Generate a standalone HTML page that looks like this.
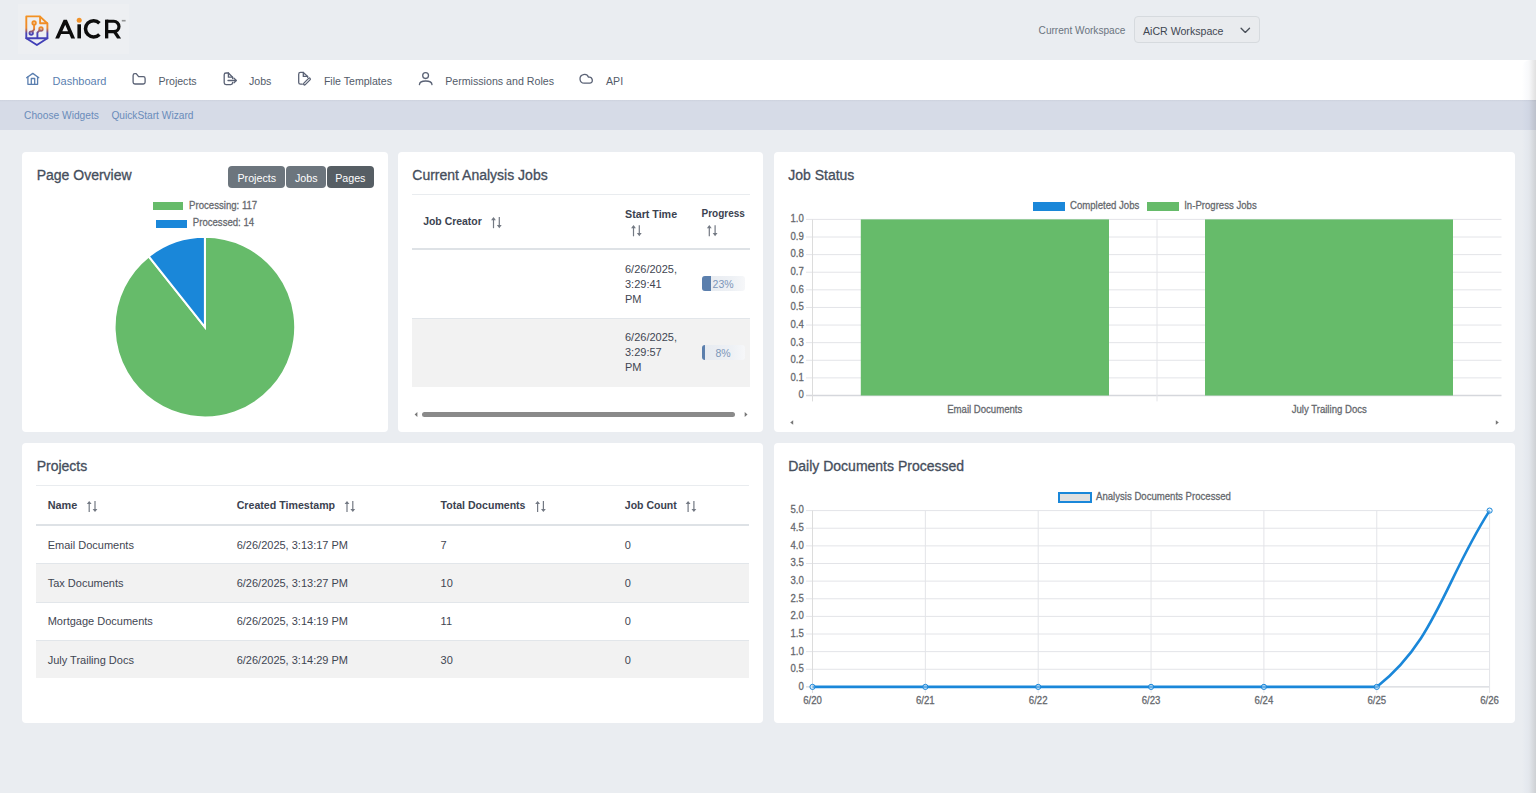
<!DOCTYPE html><html><head><meta charset="utf-8"><style>
html,body{margin:0;padding:0;}
body{width:1536px;height:793px;overflow:hidden;position:relative;background:#eaedf1;font-family:"Liberation Sans",sans-serif;}
.t{position:absolute;white-space:nowrap;line-height:1;}
.c{-webkit-text-stroke:0.25px #65686d;}
.card{position:absolute;background:#fff;border-radius:4px;}
svg{position:absolute;left:0;top:0;overflow:visible}
</style></head><body>
<div style="position:absolute;left:18px;top:4px;width:110.5px;height:49.6px;background:#edeff2;"></div>
<div class="t" style="left:1038.60px;top:25.65px;font-size:10.1px;color:#6b7480;font-weight:400;">Current Workspace</div>
<div style="position:absolute;left:1134.4px;top:16.3px;width:125.5px;height:27.099999999999998px;background:#e9ebee;border:1px solid #d6dade;border-radius:4px;box-sizing:border-box;"></div>
<div class="t" style="left:1143.00px;top:26.03px;font-size:10.6px;color:#3f4752;font-weight:400;">AiCR Workspace</div>
<div style="position:absolute;left:0px;top:60px;width:1536px;height:40px;background:#ffffff;"></div>
<div style="position:absolute;left:0px;top:100px;width:1536px;height:30px;background:#d6dbe7;"></div>
<div style="position:absolute;left:0px;top:100px;width:1536px;height:2px;background:linear-gradient(#cdd2de,#d6dbe7);"></div>
<div class="t" style="left:52.60px;top:75.59px;font-size:11px;color:#5b7fb0;font-weight:400;">Dashboard</div>
<div class="t" style="left:158.40px;top:75.93px;font-size:10.6px;color:#535b69;font-weight:400;">Projects</div>
<div class="t" style="left:249.00px;top:75.93px;font-size:10.6px;color:#535b69;font-weight:400;">Jobs</div>
<div class="t" style="left:323.90px;top:75.93px;font-size:10.6px;color:#535b69;font-weight:400;">File Templates</div>
<div class="t" style="left:445.20px;top:75.88px;font-size:10.65px;color:#535b69;font-weight:400;">Permissions and Roles</div>
<div class="t" style="left:606.00px;top:75.93px;font-size:10.6px;color:#535b69;font-weight:400;">API</div>
<div class="t" style="left:24.10px;top:110.67px;font-size:10.2px;color:#6a8cba;font-weight:400;">Choose Widgets</div>
<div class="t" style="left:111.40px;top:110.67px;font-size:10.2px;color:#6a8cba;font-weight:400;">QuickStart Wizard</div>
<div style="position:absolute;left:1522px;top:60px;width:14px;height:733px;background:linear-gradient(90deg, rgba(0,0,0,0) 0%, rgba(40,80,160,0.025) 30%, rgba(20,40,90,0.03) 50%, rgba(0,0,0,0.12) 100%);border-top-left-radius:8px;"></div>
<div class="card" style="left:22px;top:152px;width:366px;height:280px"></div>
<div class="card" style="left:398px;top:152px;width:365px;height:280px"></div>
<div class="card" style="left:774px;top:152px;width:741px;height:280px"></div>
<div class="card" style="left:22px;top:443px;width:741px;height:280px"></div>
<div class="card" style="left:774px;top:443px;width:741px;height:280px"></div>
<div class="t" style="left:36.70px;top:168.15px;font-size:14px;color:#454e5c;font-weight:400;-webkit-text-stroke:0.3px #454e5c;">Page Overview</div>
<div class="t" style="left:412.30px;top:167.95px;font-size:14px;color:#454e5c;font-weight:400;-webkit-text-stroke:0.3px #454e5c;">Current Analysis Jobs</div>
<div class="t" style="left:788.20px;top:167.95px;font-size:14px;color:#454e5c;font-weight:400;-webkit-text-stroke:0.3px #454e5c;">Job Status</div>
<div class="t" style="left:36.70px;top:459.25px;font-size:14px;color:#454e5c;font-weight:400;-webkit-text-stroke:0.3px #454e5c;">Projects</div>
<div class="t" style="left:788.20px;top:459.25px;font-size:14px;color:#454e5c;font-weight:400;-webkit-text-stroke:0.3px #454e5c;">Daily Documents Processed</div>
<div style="position:absolute;left:228.3px;top:165.5px;width:57.0px;height:22.19999999999999px;background:#6c757d;border-radius:4px;"></div>
<div style="position:absolute;left:286.4px;top:165.5px;width:39.900000000000034px;height:22.19999999999999px;background:#6c757d;border-radius:4px;"></div>
<div style="position:absolute;left:326.9px;top:165.5px;width:46.900000000000034px;height:22.19999999999999px;background:#565e64;border-radius:4px;"></div>
<div class="t" style="left:256.80px;transform:translateX(-50%) ;top:172.84px;font-size:10.7px;color:#fff;font-weight:400;">Projects</div>
<div class="t" style="left:306.30px;transform:translateX(-50%) ;top:172.84px;font-size:10.7px;color:#fff;font-weight:400;">Jobs</div>
<div class="t" style="left:350.30px;transform:translateX(-50%) ;top:172.84px;font-size:10.7px;color:#fff;font-weight:400;">Pages</div>
<div style="position:absolute;left:152.8px;top:202.4px;width:30.5px;height:7.799999999999983px;background:#66bb6a;"></div>
<div class="t c" style="left:189.10px;transform-origin:0 8.13px;transform:scaleY(1.14);top:200.87px;font-size:9.6px;color:#65686d;font-weight:400;">Processing: 117</div>
<div style="position:absolute;left:156px;top:219.8px;width:30.80000000000001px;height:8.0px;background:#1a87d9;"></div>
<div class="t c" style="left:192.80px;transform-origin:0 8.13px;transform:scaleY(1.14);top:218.47px;font-size:9.6px;color:#65686d;font-weight:400;">Processed: 14</div>
<div style="position:absolute;left:412px;top:193.5px;width:337.5px;height:1.0px;background:#e9ecef;"></div>
<div class="t" style="left:423.20px;top:217.16px;font-size:10.44px;color:#3b4250;font-weight:700;">Job Creator</div>
<div class="t" style="left:625.00px;top:208.64px;font-size:10.7px;color:#3b4250;font-weight:700;">Start Time</div>
<div class="t" style="left:701.50px;top:209.23px;font-size:10.0px;color:#3b4250;font-weight:700;">Progress</div>
<div style="position:absolute;left:412px;top:247.5px;width:337.5px;height:2.0px;background:#dee2e6;"></div>
<div style="position:absolute;left:412px;top:317.5px;width:337.5px;height:69.0px;background:#f2f2f2;"></div>
<div style="position:absolute;left:412px;top:317.5px;width:337.5px;height:1.0px;background:#e2e6ea;"></div>
<div class="t" style="left:625.00px;top:263.69px;font-size:11px;color:#3f4652;font-weight:400;">6/26/2025,</div>
<div class="t" style="left:625.00px;top:278.59px;font-size:11px;color:#3f4652;font-weight:400;">3:29:41</div>
<div class="t" style="left:625.00px;top:293.59px;font-size:11px;color:#3f4652;font-weight:400;">PM</div>
<div class="t" style="left:625.00px;top:332.49px;font-size:11px;color:#3f4652;font-weight:400;">6/26/2025,</div>
<div class="t" style="left:625.00px;top:347.39px;font-size:11px;color:#3f4652;font-weight:400;">3:29:57</div>
<div class="t" style="left:625.00px;top:362.39px;font-size:11px;color:#3f4652;font-weight:400;">PM</div>
<div style="position:absolute;left:701.5px;top:276px;width:43.200000000000045px;height:15.199999999999989px;background:linear-gradient(90deg,#e6eaf0,#eef1f5 70%,#f6f7f9);border-radius:3px;"></div>
<div style="position:absolute;left:701.5px;top:276px;width:9.936000000000035px;height:15.199999999999989px;background:#5b7fad;border-radius:3px 0 0 3px;"></div>
<div class="t" style="left:723.10px;transform:translateX(-50%) ;top:279.41px;font-size:10.5px;color:#7d96b9;font-weight:400;">23%</div>
<div style="position:absolute;left:701.5px;top:344.8px;width:43.200000000000045px;height:15.199999999999989px;background:linear-gradient(90deg,#e6eaf0,#eef1f5 70%,#f6f7f9);border-radius:3px;"></div>
<div style="position:absolute;left:701.5px;top:344.8px;width:3.4560000000000173px;height:15.199999999999989px;background:#5b7fad;border-radius:3px 0 0 3px;"></div>
<div class="t" style="left:723.10px;transform:translateX(-50%) ;top:348.21px;font-size:10.5px;color:#7d96b9;font-weight:400;">8%</div>
<div style="position:absolute;left:422px;top:412.1px;width:313px;height:4.7999999999999545px;background:#8a8a8a;border-radius:2.5px;"></div>
<div class="t c" style="right:732.20px;transform-origin:0 8.13px;transform:scaleY(1.14);top:214.27px;font-size:9.6px;color:#65686d;font-weight:400;">1.0</div>
<div class="t c" style="right:732.20px;transform-origin:0 8.13px;transform:scaleY(1.14);top:231.88px;font-size:9.6px;color:#65686d;font-weight:400;">0.9</div>
<div class="t c" style="right:732.20px;transform-origin:0 8.13px;transform:scaleY(1.14);top:249.49px;font-size:9.6px;color:#65686d;font-weight:400;">0.8</div>
<div class="t c" style="right:732.20px;transform-origin:0 8.13px;transform:scaleY(1.14);top:267.10px;font-size:9.6px;color:#65686d;font-weight:400;">0.7</div>
<div class="t c" style="right:732.20px;transform-origin:0 8.13px;transform:scaleY(1.14);top:284.71px;font-size:9.6px;color:#65686d;font-weight:400;">0.6</div>
<div class="t c" style="right:732.20px;transform-origin:0 8.13px;transform:scaleY(1.14);top:302.32px;font-size:9.6px;color:#65686d;font-weight:400;">0.5</div>
<div class="t c" style="right:732.20px;transform-origin:0 8.13px;transform:scaleY(1.14);top:319.93px;font-size:9.6px;color:#65686d;font-weight:400;">0.4</div>
<div class="t c" style="right:732.20px;transform-origin:0 8.13px;transform:scaleY(1.14);top:337.54px;font-size:9.6px;color:#65686d;font-weight:400;">0.3</div>
<div class="t c" style="right:732.20px;transform-origin:0 8.13px;transform:scaleY(1.14);top:355.15px;font-size:9.6px;color:#65686d;font-weight:400;">0.2</div>
<div class="t c" style="right:732.20px;transform-origin:0 8.13px;transform:scaleY(1.14);top:372.76px;font-size:9.6px;color:#65686d;font-weight:400;">0.1</div>
<div class="t c" style="right:732.20px;transform-origin:0 8.13px;transform:scaleY(1.14);top:390.37px;font-size:9.6px;color:#65686d;font-weight:400;">0</div>
<div class="t c" style="left:984.75px;transform-origin:0 8.13px;transform:translateX(-50%) scaleY(1.14);top:404.97px;font-size:9.6px;color:#65686d;font-weight:400;">Email Documents</div>
<div class="t c" style="left:1329.25px;transform-origin:0 8.13px;transform:translateX(-50%) scaleY(1.14);top:404.97px;font-size:9.6px;color:#65686d;font-weight:400;">July Trailing Docs</div>
<div style="position:absolute;left:1033px;top:201.7px;width:32px;height:9.400000000000006px;background:#1a87d9;"></div>
<div class="t c" style="left:1070.00px;transform-origin:0 8.13px;transform:scaleY(1.14);top:201.17px;font-size:9.6px;color:#65686d;font-weight:400;">Completed Jobs</div>
<div style="position:absolute;left:1147.2px;top:201.7px;width:31.799999999999955px;height:9.400000000000006px;background:#66bb6a;"></div>
<div class="t c" style="left:1184.20px;transform-origin:0 8.13px;transform:scaleY(1.14);top:201.17px;font-size:9.6px;color:#65686d;font-weight:400;">In-Progress Jobs</div>
<div style="position:absolute;left:36px;top:484.7px;width:713.4px;height:1.0px;background:#e9ecef;"></div>
<div class="t" style="left:47.70px;top:500.21px;font-size:10.86px;color:#3b4250;font-weight:700;">Name</div>
<div class="t" style="left:236.70px;top:500.40px;font-size:10.63px;color:#3b4250;font-weight:700;">Created Timestamp</div>
<div class="t" style="left:440.60px;top:500.45px;font-size:10.57px;color:#3b4250;font-weight:700;">Total Documents</div>
<div class="t" style="left:624.80px;top:500.49px;font-size:10.52px;color:#3b4250;font-weight:700;">Job Count</div>
<div style="position:absolute;left:36px;top:524px;width:713.4px;height:2px;background:#dee2e6;"></div>
<div class="t" style="left:47.70px;top:539.89px;font-size:11px;color:#3f4652;font-weight:400;">Email Documents</div>
<div class="t" style="left:236.70px;top:539.89px;font-size:11px;color:#3f4652;font-weight:400;">6/26/2025, 3:13:17 PM</div>
<div class="t" style="left:440.60px;top:539.89px;font-size:11px;color:#3f4652;font-weight:400;">7</div>
<div class="t" style="left:624.80px;top:539.89px;font-size:11px;color:#3f4652;font-weight:400;">0</div>
<div style="position:absolute;left:36px;top:562.7px;width:713.4px;height:39.59999999999991px;background:#f2f2f2;"></div>
<div style="position:absolute;left:36px;top:562.7px;width:713.4px;height:1.0px;background:#e2e6ea;"></div>
<div class="t" style="left:47.70px;top:577.99px;font-size:11px;color:#3f4652;font-weight:400;">Tax Documents</div>
<div class="t" style="left:236.70px;top:577.99px;font-size:11px;color:#3f4652;font-weight:400;">6/26/2025, 3:13:27 PM</div>
<div class="t" style="left:440.60px;top:577.99px;font-size:11px;color:#3f4652;font-weight:400;">10</div>
<div class="t" style="left:624.80px;top:577.99px;font-size:11px;color:#3f4652;font-weight:400;">0</div>
<div style="position:absolute;left:36px;top:602.3px;width:713.4px;height:1.0px;background:#e2e6ea;"></div>
<div class="t" style="left:47.70px;top:616.29px;font-size:11px;color:#3f4652;font-weight:400;">Mortgage Documents</div>
<div class="t" style="left:236.70px;top:616.29px;font-size:11px;color:#3f4652;font-weight:400;">6/26/2025, 3:14:19 PM</div>
<div class="t" style="left:440.60px;top:616.29px;font-size:11px;color:#3f4652;font-weight:400;">11</div>
<div class="t" style="left:624.80px;top:616.29px;font-size:11px;color:#3f4652;font-weight:400;">0</div>
<div style="position:absolute;left:36px;top:640.1px;width:713.4px;height:38.299999999999955px;background:#f2f2f2;"></div>
<div style="position:absolute;left:36px;top:640.1px;width:713.4px;height:1.0px;background:#e2e6ea;"></div>
<div class="t" style="left:47.70px;top:654.69px;font-size:11px;color:#3f4652;font-weight:400;">July Trailing Docs</div>
<div class="t" style="left:236.70px;top:654.69px;font-size:11px;color:#3f4652;font-weight:400;">6/26/2025, 3:14:29 PM</div>
<div class="t" style="left:440.60px;top:654.69px;font-size:11px;color:#3f4652;font-weight:400;">30</div>
<div class="t" style="left:624.80px;top:654.69px;font-size:11px;color:#3f4652;font-weight:400;">0</div>
<div class="t c" style="right:732.20px;transform-origin:0 8.13px;transform:scaleY(1.14);top:505.47px;font-size:9.6px;color:#65686d;font-weight:400;">5.0</div>
<div class="t c" style="right:732.20px;transform-origin:0 8.13px;transform:scaleY(1.14);top:523.10px;font-size:9.6px;color:#65686d;font-weight:400;">4.5</div>
<div class="t c" style="right:732.20px;transform-origin:0 8.13px;transform:scaleY(1.14);top:540.73px;font-size:9.6px;color:#65686d;font-weight:400;">4.0</div>
<div class="t c" style="right:732.20px;transform-origin:0 8.13px;transform:scaleY(1.14);top:558.36px;font-size:9.6px;color:#65686d;font-weight:400;">3.5</div>
<div class="t c" style="right:732.20px;transform-origin:0 8.13px;transform:scaleY(1.14);top:575.99px;font-size:9.6px;color:#65686d;font-weight:400;">3.0</div>
<div class="t c" style="right:732.20px;transform-origin:0 8.13px;transform:scaleY(1.14);top:593.62px;font-size:9.6px;color:#65686d;font-weight:400;">2.5</div>
<div class="t c" style="right:732.20px;transform-origin:0 8.13px;transform:scaleY(1.14);top:611.25px;font-size:9.6px;color:#65686d;font-weight:400;">2.0</div>
<div class="t c" style="right:732.20px;transform-origin:0 8.13px;transform:scaleY(1.14);top:628.88px;font-size:9.6px;color:#65686d;font-weight:400;">1.5</div>
<div class="t c" style="right:732.20px;transform-origin:0 8.13px;transform:scaleY(1.14);top:646.51px;font-size:9.6px;color:#65686d;font-weight:400;">1.0</div>
<div class="t c" style="right:732.20px;transform-origin:0 8.13px;transform:scaleY(1.14);top:664.14px;font-size:9.6px;color:#65686d;font-weight:400;">0.5</div>
<div class="t c" style="right:732.20px;transform-origin:0 8.13px;transform:scaleY(1.14);top:681.77px;font-size:9.6px;color:#65686d;font-weight:400;">0</div>
<div class="t c" style="left:812.50px;transform-origin:0 8.13px;transform:translateX(-50%) scaleY(1.14);top:695.77px;font-size:9.6px;color:#65686d;font-weight:400;">6/20</div>
<div class="t c" style="left:925.35px;transform-origin:0 8.13px;transform:translateX(-50%) scaleY(1.14);top:695.77px;font-size:9.6px;color:#65686d;font-weight:400;">6/21</div>
<div class="t c" style="left:1038.20px;transform-origin:0 8.13px;transform:translateX(-50%) scaleY(1.14);top:695.77px;font-size:9.6px;color:#65686d;font-weight:400;">6/22</div>
<div class="t c" style="left:1151.05px;transform-origin:0 8.13px;transform:translateX(-50%) scaleY(1.14);top:695.77px;font-size:9.6px;color:#65686d;font-weight:400;">6/23</div>
<div class="t c" style="left:1263.90px;transform-origin:0 8.13px;transform:translateX(-50%) scaleY(1.14);top:695.77px;font-size:9.6px;color:#65686d;font-weight:400;">6/24</div>
<div class="t c" style="left:1376.75px;transform-origin:0 8.13px;transform:translateX(-50%) scaleY(1.14);top:695.77px;font-size:9.6px;color:#65686d;font-weight:400;">6/25</div>
<div class="t c" style="left:1489.60px;transform-origin:0 8.13px;transform:translateX(-50%) scaleY(1.14);top:695.77px;font-size:9.6px;color:#65686d;font-weight:400;">6/26</div>
<div style="position:absolute;left:1057.7px;top:492.2px;width:34.09999999999991px;height:11.199999999999989px;background:#e0e0e0;border:2.6px solid #1a87d9;box-sizing:border-box;"></div>
<div class="t c" style="left:1096.00px;transform-origin:0 8.13px;transform:scaleY(1.14);top:492.07px;font-size:9.6px;color:#65686d;font-weight:400;">Analysis Documents Processed</div>
<svg width="1536" height="793" viewBox="0 0 1536 793"><path d="M204.9,327.1 L204.9,236.8 A90.3,90.3 0 1 1 148.72,256.40 Z" fill="#66bb6a" stroke="#fff" stroke-width="2"/><path d="M204.9,327.1 L148.72,256.40 A90.3,90.3 0 0 1 204.9,236.8 Z" fill="#1a87d9" stroke="#fff" stroke-width="2"/><path d="M417.4,412 L414.6,414.5 L417.4,417 Z" fill="#777"/><path d="M744.7,412 L747.5,414.5 L744.7,417 Z" fill="#777"/><g stroke="#737983" stroke-width="1.2" fill="none"><path d="M493.5,218.4 V228.20000000000002"/><path d="M499.3,217.1 V226.9"/></g><path d="M491.1,220.20000000000002 L493.5,217.0 L495.9,220.20000000000002 Z" fill="#737983"/><path d="M496.9,225.0 L499.3,228.20000000000002 L501.7,225.0 Z" fill="#737983"/><g stroke="#737983" stroke-width="1.2" fill="none"><path d="M633.5,226.5 V236.3"/><path d="M639.3,225.2 V235.0"/></g><path d="M631.1,228.3 L633.5,225.1 L635.9,228.3 Z" fill="#737983"/><path d="M636.9,233.1 L639.3,236.3 L641.7,233.1 Z" fill="#737983"/><g stroke="#737983" stroke-width="1.2" fill="none"><path d="M709.3,226.5 V236.3"/><path d="M715.0999999999999,225.2 V235.0"/></g><path d="M706.9,228.3 L709.3,225.1 L711.6999999999999,228.3 Z" fill="#737983"/><path d="M712.6999999999999,233.1 L715.0999999999999,236.3 L717.5,233.1 Z" fill="#737983"/><line x1="806" y1="219.40" x2="1501.5" y2="219.40" stroke="#e3e4e8" stroke-width="1"/><line x1="806" y1="237.01" x2="1501.5" y2="237.01" stroke="#e3e4e8" stroke-width="1"/><line x1="806" y1="254.62" x2="1501.5" y2="254.62" stroke="#e3e4e8" stroke-width="1"/><line x1="806" y1="272.23" x2="1501.5" y2="272.23" stroke="#e3e4e8" stroke-width="1"/><line x1="806" y1="289.84" x2="1501.5" y2="289.84" stroke="#e3e4e8" stroke-width="1"/><line x1="806" y1="307.45" x2="1501.5" y2="307.45" stroke="#e3e4e8" stroke-width="1"/><line x1="806" y1="325.06" x2="1501.5" y2="325.06" stroke="#e3e4e8" stroke-width="1"/><line x1="806" y1="342.67" x2="1501.5" y2="342.67" stroke="#e3e4e8" stroke-width="1"/><line x1="806" y1="360.28" x2="1501.5" y2="360.28" stroke="#e3e4e8" stroke-width="1"/><line x1="806" y1="377.89" x2="1501.5" y2="377.89" stroke="#e3e4e8" stroke-width="1"/><line x1="806" y1="395.50" x2="1501.5" y2="395.50" stroke="#d5d7dc" stroke-width="1.3"/><line x1="812.5" y1="219.4" x2="812.5" y2="401.4" stroke="#dcdcdc" stroke-width="1"/><line x1="1157" y1="219.4" x2="1157" y2="401.4" stroke="#e3e4e8" stroke-width="1"/><rect x="860.8" y="219.4" width="248.2" height="176.10" fill="#66bb6a"/><rect x="1205" y="219.4" width="248" height="176.10" fill="#66bb6a"/><path d="M793.2,420.3 L790.2,422.5 L793.2,424.8 Z" fill="#777"/><path d="M1495.8,420.3 L1498.8,422.5 L1495.8,424.8 Z" fill="#777"/><g stroke="#737983" stroke-width="1.2" fill="none"><path d="M89.2,502.3 V512.1"/><path d="M95.0,501.0 V510.8"/></g><path d="M86.8,504.1 L89.2,500.90000000000003 L91.60000000000001,504.1 Z" fill="#737983"/><path d="M92.60000000000001,508.90000000000003 L95.0,512.1 L97.4,508.90000000000003 Z" fill="#737983"/><g stroke="#737983" stroke-width="1.2" fill="none"><path d="M347.0,502.3 V512.1"/><path d="M352.8,501.0 V510.8"/></g><path d="M344.6,504.1 L347.0,500.90000000000003 L349.4,504.1 Z" fill="#737983"/><path d="M350.4,508.90000000000003 L352.8,512.1 L355.2,508.90000000000003 Z" fill="#737983"/><g stroke="#737983" stroke-width="1.2" fill="none"><path d="M537.6,502.3 V512.1"/><path d="M543.4,501.0 V510.8"/></g><path d="M535.2,504.1 L537.6,500.90000000000003 L540.0,504.1 Z" fill="#737983"/><path d="M541.0,508.90000000000003 L543.4,512.1 L545.8000000000001,508.90000000000003 Z" fill="#737983"/><g stroke="#737983" stroke-width="1.2" fill="none"><path d="M688.1,502.3 V512.1"/><path d="M693.9,501.0 V510.8"/></g><path d="M685.7,504.1 L688.1,500.90000000000003 L690.5,504.1 Z" fill="#737983"/><path d="M691.5,508.90000000000003 L693.9,512.1 L696.3000000000001,508.90000000000003 Z" fill="#737983"/><line x1="806" y1="510.60" x2="1489.60" y2="510.60" stroke="#e3e4e8" stroke-width="1"/><line x1="806" y1="528.23" x2="1489.60" y2="528.23" stroke="#e3e4e8" stroke-width="1"/><line x1="806" y1="545.86" x2="1489.60" y2="545.86" stroke="#e3e4e8" stroke-width="1"/><line x1="806" y1="563.49" x2="1489.60" y2="563.49" stroke="#e3e4e8" stroke-width="1"/><line x1="806" y1="581.12" x2="1489.60" y2="581.12" stroke="#e3e4e8" stroke-width="1"/><line x1="806" y1="598.75" x2="1489.60" y2="598.75" stroke="#e3e4e8" stroke-width="1"/><line x1="806" y1="616.38" x2="1489.60" y2="616.38" stroke="#e3e4e8" stroke-width="1"/><line x1="806" y1="634.01" x2="1489.60" y2="634.01" stroke="#e3e4e8" stroke-width="1"/><line x1="806" y1="651.64" x2="1489.60" y2="651.64" stroke="#e3e4e8" stroke-width="1"/><line x1="806" y1="669.27" x2="1489.60" y2="669.27" stroke="#e3e4e8" stroke-width="1"/><line x1="806" y1="686.90" x2="1489.60" y2="686.90" stroke="#d5d7dc" stroke-width="1.3"/><line x1="812.50" y1="510.6" x2="812.50" y2="692.9" stroke="#dcdcdc" stroke-width="1"/><line x1="925.35" y1="510.6" x2="925.35" y2="692.9" stroke="#e3e4e8" stroke-width="1"/><line x1="1038.20" y1="510.6" x2="1038.20" y2="692.9" stroke="#e3e4e8" stroke-width="1"/><line x1="1151.05" y1="510.6" x2="1151.05" y2="692.9" stroke="#e3e4e8" stroke-width="1"/><line x1="1263.90" y1="510.6" x2="1263.90" y2="692.9" stroke="#e3e4e8" stroke-width="1"/><line x1="1376.75" y1="510.6" x2="1376.75" y2="692.9" stroke="#e3e4e8" stroke-width="1"/><line x1="1489.60" y1="510.6" x2="1489.60" y2="692.9" stroke="#e3e4e8" stroke-width="1"/><path d="M812.5,686.9 L1376.75,686.9 C1435.43,641.06 1444.46,581.12 1489.60,510.60" fill="none" stroke="#1a87d9" stroke-width="2.6"/><circle cx="812.50" cy="686.90" r="2.6" fill="rgba(215,232,250,0.4)" stroke="#1a87d9" stroke-width="1"/><circle cx="925.35" cy="686.90" r="2.6" fill="rgba(215,232,250,0.4)" stroke="#1a87d9" stroke-width="1"/><circle cx="1038.20" cy="686.90" r="2.6" fill="rgba(215,232,250,0.4)" stroke="#1a87d9" stroke-width="1"/><circle cx="1151.05" cy="686.90" r="2.6" fill="rgba(215,232,250,0.4)" stroke="#1a87d9" stroke-width="1"/><circle cx="1263.90" cy="686.90" r="2.6" fill="rgba(215,232,250,0.4)" stroke="#1a87d9" stroke-width="1"/><circle cx="1376.75" cy="686.90" r="2.6" fill="rgba(215,232,250,0.4)" stroke="#1a87d9" stroke-width="1"/><circle cx="1489.60" cy="510.60" r="2.6" fill="rgba(215,232,250,0.4)" stroke="#1a87d9" stroke-width="1"/><g fill="none" stroke-width="1.3" stroke-linecap="round" stroke-linejoin="round" stroke="#5b7fb0"><path d="M26.6,77.7 L32.8,73.4 L38.8,77.7"/><path d="M27.9,76.8 V84.3 H37.6 V76.8"/><path d="M31.3,84.3 V78.5 H34.7 V84.3"/></g><g fill="none" stroke-width="1.3" stroke-linecap="round" stroke-linejoin="round" stroke="#5a6275"><path d="M133.1,75.5 Q133.1,73.7 134.9,73.7 H136.2 L138.6,76.7 H143.3 Q145.1,76.7 145.1,78.5 V82.2 Q145.1,84 143.3,84 H134.9 Q133.1,84 133.1,82.2 Z"/></g><g fill="none" stroke-width="1.3" stroke-linecap="round" stroke-linejoin="round" stroke="#5a6275"><path d="M232.6,78.6 V77.2 L228.4,73 H226 Q224.2,73 224.2,74.8 V82.8 Q224.2,84.6 226,84.6 H230.8 Q232.6,84.6 232.6,82.8 V82.4"/><path d="M228.4,73 V77.2 H232.6"/><path d="M228,80.5 H236"/><path d="M234,78.2 L236.3,80.5 L234,82.8"/></g><g fill="none" stroke-width="1.3" stroke-linecap="round" stroke-linejoin="round" stroke="#5a6275"><path d="M302.3,84.2 H300.5 Q298.7,84.2 298.7,82.4 V74.2 Q298.7,72.4 300.5,72.4 H303.3 L307.6,76.4 V77.3"/><path d="M303.3,72.4 V76.4 H307.6"/><path d="M303.9,83.1 L308.6,78.4 Q309.4,77.6 310.1,78.4 Q310.8,79.1 310,79.9 L305.3,84.6 Q304.5,85.3 303.8,84.6 Q303.1,83.9 303.9,83.1 Z"/></g><g fill="none" stroke-width="1.3" stroke-linecap="round" stroke-linejoin="round" stroke="#5a6275"><circle cx="425.6" cy="75.6" r="2.9"/><path d="M419.4,84.6 C419.6,82.2 422,81 425.7,81 C429.4,81 431.8,82.2 432,84.6"/></g><g fill="none" stroke-width="1.3" stroke-linecap="round" stroke-linejoin="round" stroke="#5a6275"><path d="M584.2,83.2 A4.4,4.4 0 1 1 588.5,77.2 A3.05,3.05 0 0 1 589.9,83.2 Z"/></g><path d="M1241.1,28.3 L1245.3,32.4 L1249.5,28.3" fill="none" stroke="#4a5059" stroke-width="1.35" stroke-linecap="round" stroke-linejoin="round"/><defs><linearGradient id="lg" x1="0" y1="16" x2="0" y2="46" gradientUnits="userSpaceOnUse">
<stop offset="0" stop-color="#f39222"/><stop offset="0.4" stop-color="#ee8a2a"/><stop offset="0.5" stop-color="#9a5a6c"/><stop offset="0.58" stop-color="#4a44b5"/><stop offset="1" stop-color="#3c3cb8"/></linearGradient></defs>
<g fill="none" stroke="url(#lg)" stroke-width="1.9" stroke-linejoin="round" stroke-linecap="round">
<path d="M26.3,16.4 H39.8 L47.4,23.5 V38.3 L36.9,45 L26.3,38.3 Z"/>
<path d="M26.3,38.2 H47.4"/>
<path d="M40.1,16.6 V23.3 H47.2"/>
<circle cx="34.1" cy="22.9" r="1.7"/>
<path d="M34.1,24.6 V29.5 L32.3,31.7"/>
<circle cx="31.2" cy="33.1" r="1.7"/>
<circle cx="41" cy="29" r="1.7"/>
<path d="M39.8,30.2 L37.4,32.6 V38"/>
</g><g fill="#0d0d0d"><path fill-rule="evenodd" d="M55.2,38.4 L63.6,19.65 L66.9,19.65 L75.1,38.4 L71.2,38.4 L69.28,34 L61.07,34 L59.1,38.4 Z M62.33,31.2 L68.05,31.2 L65.22,24.73 Z"/><rect x="77.4" y="24.3" width="3.6" height="14.1"/><rect x="105" y="19.65" width="3.3" height="18.75"/><path d="M112.3,31.2 L116.2,31.2 L121.1,38.4 L117.1,38.4 Z"/></g><g fill="none" stroke="#0d0d0d"><path d="M99.43,23.22 A8.1,8.1 0 1 0 99.43,34.48" stroke-width="3.5"/><path d="M106.6,21.25 H113.8 A5.17,5.17 0 0 1 113.8,31.6 H106.6" stroke-width="3.2"/></g><circle cx="79.2" cy="20.3" r="2.5" fill="#f0922a"/><rect x="121.8" y="19.9" width="3.8" height="1.6" fill="#555" opacity="0.6"/></svg>
</body></html>
